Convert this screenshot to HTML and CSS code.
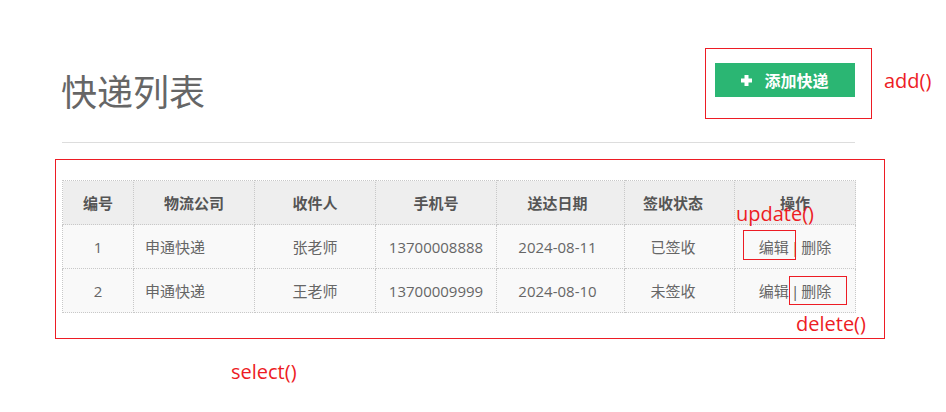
FILE: index.html
```html
<!DOCTYPE html>
<html lang="zh-CN">
<head>
    <meta charset="UTF-8">
    <meta name="viewport" content="width=device-width, initial-scale=1.0">
    <title>快递列表</title>
    <link rel="stylesheet" href="styles.css">
</head>
<body>
    <div class="page">
        <!-- Title and add button -->
        <div class="header">
            <h1 class="title">快递列表</h1>
            <button class="btn-add">
                <svg class="icon-plus" width="11" height="11" viewBox="0 0 11 11">
                    <path d="M3.5 0h4v3.5H11v4H7.5V11h-4V7.5H0v-4h3.5z" fill="#fff"/>
                </svg>
                <span>添加快递</span>
            </button>
        </div>

        <!-- Table of express records -->
        <div class="table-frame">
            <table class="express-table">
                <colgroup>
                    <col class="col-id">
                    <col class="col-company">
                    <col class="col-name">
                    <col class="col-phone">
                    <col class="col-date">
                    <col class="col-status">
                    <col class="col-ops">
                </colgroup>
                <thead>
                    <tr>
                        <th>编号</th>
                        <th>物流公司</th>
                        <th>收件人</th>
                        <th>手机号</th>
                        <th class="cell-date">送达日期</th>
                        <th class="cell-status">签收状态</th>
                        <th>操作</th>
                    </tr>
                </thead>
                <tbody>
                    <tr>
                        <td>1</td>
                        <td class="left">申通快递</td>
                        <td>张老师</td>
                        <td>13700008888</td>
                        <td class="cell-date">2024-08-11</td>
                        <td class="cell-status">已签收</td>
                        <td><a href="#">编辑</a><span class="sep">|</span><a href="#">删除</a></td>
                    </tr>
                    <tr>
                        <td>2</td>
                        <td class="left">申通快递</td>
                        <td>王老师</td>
                        <td>13700009999</td>
                        <td class="cell-date">2024-08-10</td>
                        <td class="cell-status">未签收</td>
                        <td><a href="#">编辑</a><span class="sep">|</span><a href="#">删除</a></td>
                    </tr>
                </tbody>
            </table>
        </div>

        <!-- Red annotations drawn over the page -->
        <div class="note-box box-add"></div>
        <div class="note-box box-update"></div>
        <div class="note-box box-delete"></div>
        <span class="note note-add">add()</span>
        <span class="note note-update">update()</span>
        <span class="note note-delete">delete()</span>
        <span class="note note-select">select()</span>
    </div>
</body>
</html>
```

FILE: styles.css
```css
/* Page style */
body {
    margin: 0;
    background: #fff;
    font-family: "Open Sans", "Noto Sans CJK SC", sans-serif;
    color: #666;
}

.page {
    position: relative;
    width: 946px;
    height: 412px;
    padding-left: 62px;
    box-sizing: border-box;
    overflow: hidden;
}

/* Header */
.header {
    width: 793px;
    display: flex;
    justify-content: space-between;
    align-items: flex-start;
    padding: 63px 0 34px;
    border-bottom: 1px solid #ddd;
}

.title {
    margin: 9px 0 0 -1px;
    font-family: "Noto Sans CJK SC", sans-serif;
    font-size: 36px;
    line-height: 36px;
    font-weight: normal;
    color: #666;
}

.btn-add {
    width: 140px;
    height: 34px;
    padding: 0;
    display: flex;
    align-items: center;
    justify-content: center;
    gap: 12px;
    background-color: #2bb673;
    color: #fff;
    border: none;
    font-family: "Noto Sans CJK SC", sans-serif;
    font-size: 16px;
    font-weight: bold;
    cursor: pointer;
}

.icon-plus {
    display: block;
}

/* Table */
.table-frame {
    width: 830px;
    box-sizing: border-box;
    margin: 16px 0 0 -7px;
    padding: 20px 29px 25px 6px;
    border: 1px solid #ed1c24;
}

.express-table {
    width: 793px;
    border-collapse: collapse;
    table-layout: fixed;
    font-size: 15px;
}

.col-id { width: 71px; }
.col-company { width: 121px; }
.col-name { width: 121px; }
.col-phone { width: 121px; }
.col-date { width: 128px; }
.col-status { width: 110px; }
.col-ops { width: 121px; }

.express-table th,
.express-table td {
    height: 43px;
    padding: 0;
    border: 1px dotted #c8c8c8;
    text-align: center;
    white-space: nowrap;
}

.express-table th {
    background-color: #eee;
    color: #555;
    font-weight: bold;
}

.express-table td {
    background-color: #f9f9f9;
}

.express-table td.left {
    padding-left: 11px;
    text-align: left;
}

.express-table .cell-date {
    padding-right: 6px;
}

.express-table .cell-status {
    padding-right: 13px;
}

.express-table a {
    color: #666;
    text-decoration: none;
}

.sep {
    margin: 0 2px;
    color: #555;
}

/* Annotations */
.note-box {
    position: absolute;
    box-sizing: border-box;
    border: 1px solid #ed1c24;
}

.box-add { left: 705px; top: 48px; width: 167px; height: 71px; }
.box-update { left: 743px; top: 230px; width: 53px; height: 30px; }
.box-delete { left: 789px; top: 276px; width: 58px; height: 29px; }

.note {
    position: absolute;
    font-family: "Open Sans", sans-serif;
    font-size: 20px;
    line-height: 20px;
    color: #ed1c24;
}

.note-add { left: 884px; top: 71px; }
.note-update { left: 736px; top: 204px; }
.note-delete { left: 796px; top: 314px; }
.note-select { left: 231px; top: 362px; }
```
